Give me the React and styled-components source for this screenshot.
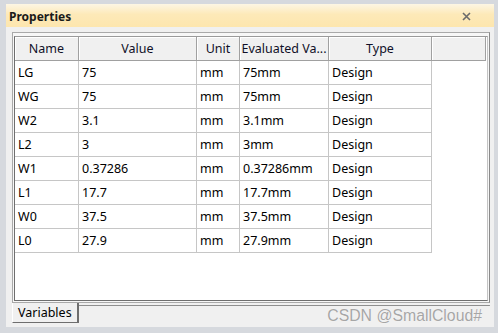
import React from "react";
import styled, { createGlobalStyle } from "styled-components";

const GlobalStyle = createGlobalStyle`
  html, body {
    margin: 0;
    padding: 0;
    background: #d6d9de;
  }
  body {
    font-family: "Noto Sans", "Liberation Sans", sans-serif;
  }
`;

const columns = ["Name", "Value", "Unit", "Evaluated Va...", "Type", ""];

const variables = [
  { name: "LG", value: "75" },
  { name: "WG", value: "75" },
  { name: "W2", value: "3.1" },
  { name: "L2", value: "3" },
  { name: "W1", value: "0.37286" },
  { name: "L1", value: "17.7" },
  { name: "W0", value: "37.5" },
  { name: "L0", value: "27.9" },
];

const App = () => {
  return (
    <Page>
      <GlobalStyle />
      <Panel>
        <TitleBar>
          <Title>Properties</Title>
          <CloseButton>
            <svg width="9" height="9" viewBox="0 0 9 9">
              <path d="M1 1 L8 8 M8 1 L1 8" stroke="#6b6b6b" strokeWidth="1.6" />
            </svg>
          </CloseButton>
        </TitleBar>
        <Body>
          <Frame>
            <Inner>
              <Grid>
                {columns.map((c, i) => (
                  <HeaderCell key={i}>{c}</HeaderCell>
                ))}
                {variables.map((v) => (
                  <React.Fragment key={v.name}>
                    <Cell>{v.name}</Cell>
                    <Cell>{v.value}</Cell>
                    <Cell>mm</Cell>
                    <Cell>{v.value}mm</Cell>
                    <Cell>Design</Cell>
                    <Empty />
                  </React.Fragment>
                ))}
              </Grid>
            </Inner>
          </Frame>
          <TabStrip>
            <Tab>Variables</Tab>
            <TabLine />
          </TabStrip>
          <Watermark>CSDN @SmallCloud#</Watermark>
        </Body>
      </Panel>
    </Page>
  );
};

export default App;

const Page = styled.div`
  width: 498px;
  height: 333px;
  box-sizing: border-box;
  padding: 4px 4px 6px 6px;
`;

const Panel = styled.div`
  width: 488px;
  height: 323px;
  display: flex;
  flex-direction: column;
  background: #f0f0f0;
`;

const TitleBar = styled.div`
  height: 23px;
  flex: none;
  display: flex;
  align-items: center;
  justify-content: space-between;
  padding: 0 23px 0 3px;
  background: linear-gradient(#fdf6e4, #fde9b8 45%, #fde6ae);
`;

const Title = styled.span`
  font-size: 12px;
  font-weight: bold;
  color: #1a1a1a;
  margin-top: 1px;
`;

const CloseButton = styled.span`
  display: flex;
  margin-top: 1px;
`;

const Body = styled.div`
  position: relative;
  flex: 1;
  display: flex;
  flex-direction: column;
  padding: 5px 4px 4px 6px;
`;

const Frame = styled.div`
  height: 271px;
  box-sizing: border-box;
  border: 1px solid #a9a9a9;
  border-right-color: #8a8a8a;
  padding: 3px 1px 1px 1px;
  background: #f7f7f7;
`;

const Inner = styled.div`
  height: 100%;
  box-sizing: border-box;
  border: 1px solid #6e6e6e;
  border-top-color: #9a9a9a;
  border-right-color: #c4c4c4;
  border-bottom-color: #6e6e6e;
  background: #ffffff;
`;

const Grid = styled.div`
  display: grid;
  grid-template-columns: 64px 118px 43px 89px 103px 54px;
  grid-auto-rows: 24px;
`;

const HeaderCell = styled.div`
  box-sizing: border-box;
  display: flex;
  align-items: center;
  justify-content: center;
  background: #f0f0f0;
  border-right: 1px solid #a0a0a0;
  border-bottom: 1px solid #a0a0a0;
  box-shadow: inset 1px 1px 0 #ffffff;
  font-size: 12.5px;
  color: #101028;
  white-space: nowrap;
  overflow: hidden;
`;

const Cell = styled.div`
  box-sizing: border-box;
  display: flex;
  align-items: center;
  padding-left: 3px;
  border-right: 1px solid #c6c6c6;
  border-bottom: 1px solid #c6c6c6;
  font-size: 12.5px;
  color: #000000;
  white-space: nowrap;
`;

const Empty = styled.div``;

const TabStrip = styled.div`
  display: flex;
  align-items: flex-start;
  height: 20px;
`;

const Tab = styled.div`
  box-sizing: border-box;
  width: 67px;
  height: 20px;
  padding: 0 0 0 5px;
  display: flex;
  align-items: center;
  background: #f0f0f0;
  border-left: 1px solid #ffffff;
  border-right: 2px solid #6e6e6e;
  border-bottom: 1px solid #6e6e6e;
  font-size: 12.5px;
  color: #000000;
`;

const TabLine = styled.div`
  flex: 1;
  margin-top: 2px;
  border-top: 1px solid #8e8e8e;
  border-right: 1px solid #a0a0a0;
  height: 0;
`;

const Watermark = styled.span`
  position: absolute;
  right: 12px;
  bottom: 2px;
  font-family: "Liberation Sans", Arial, sans-serif;
  font-size: 15.8px;
  color: #a6a6a6;
  text-shadow: 0 0 1px #ffffff;
`;
